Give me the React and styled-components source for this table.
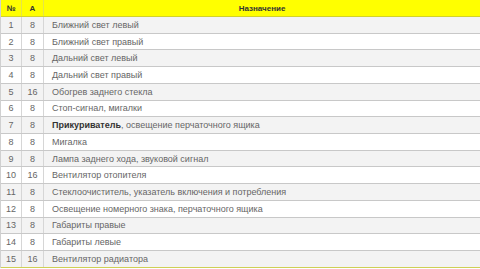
import React from 'react';
import styled, { createGlobalStyle } from 'styled-components';

const Global = createGlobalStyle`
   html, body {
      margin: 0;
      padding: 0;
      background: #fff;
   }
   body {
      font-family: 'Liberation Sans', Arial, sans-serif;
   }
`;

const fuses = [
   [1, 8, 'Ближний свет левый'],
   [2, 8, 'Ближний свет правый'],
   [3, 8, 'Дальний свет левый'],
   [4, 8, 'Дальний свет правый'],
   [5, 16, 'Обогрев заднего стекла'],
   [6, 8, 'Стоп-сигнал, мигалки'],
   [7, 8, <><b>Прикуриватель</b>, освещение перчаточного ящика</>],
   [8, 8, 'Мигалка'],
   [9, 8, 'Лампа заднего хода, звуковой сигнал'],
   [10, 16, 'Вентилятор отопителя'],
   [11, 8, 'Стеклоочиститель, указатель включения и потребления'],
   [12, 8, 'Освещение номерного знака, перчаточного ящика'],
   [13, 8, 'Габариты правые'],
   [14, 8, 'Габариты левые'],
   [15, 16, 'Вентилятор радиатора'],
];

const App = () => {
   return (
      <>
         <Global />
         <Table>
            <Head>
               <HeadCell>№</HeadCell>
               <HeadCell>А</HeadCell>
               <HeadCell $last>Назначение</HeadCell>
            </Head>
            {fuses.map(([num, amp, text], idx) => (
               <Row key={num} $odd={idx % 2 === 0} $lastRow={idx === fuses.length - 1}>
                  <Cell $center>{num}</Cell>
                  <Cell $center>{amp}</Cell>
                  <Cell $last>{text}</Cell>
               </Row>
            ))}
         </Table>
      </>
   );
};

const Table = styled.div`
   display: flex;
   flex-direction: column;
   width: 480px;
   box-sizing: border-box;
   border-left: 1px solid #d0d0d0;
`;

const Head = styled.div`
   display: grid;
   grid-template-columns: 21px 22px 1fr;
   height: 17px;
   box-sizing: border-box;
   background: #ffff00;
   border-bottom: 1px solid #d2d22a;
   font-size: 8px;
   font-weight: bold;
   color: #333;
`;

const HeadCell = styled.div`
   display: flex;
   align-items: center;
   justify-content: center;
   border-right: ${p => (p.$last ? 'none' : '1px solid #e4e44a')};
`;

const Row = styled.div`
   display: grid;
   grid-template-columns: 21px 22px 1fr;
   height: 16.73px;
   box-sizing: border-box;
   background: ${p => (p.$odd ? '#f3f3f3' : '#ffffff')};
   border-bottom: ${p => (p.$lastRow ? '1px solid #cfcf55' : '1px solid #c8c8c8')};
   font-size: 9px;
   color: #666;
   b {
      color: #333;
   }
`;

const Cell = styled.div`
   display: flex;
   align-items: center;
   justify-content: ${p => (p.$center ? 'center' : 'flex-start')};
   padding-left: ${p => (p.$center ? '0' : '8px')};
   border-right: ${p => (p.$last ? 'none' : '1px solid #d6d6d6')};
   white-space: nowrap;
   overflow: hidden;
`;

export default App;
